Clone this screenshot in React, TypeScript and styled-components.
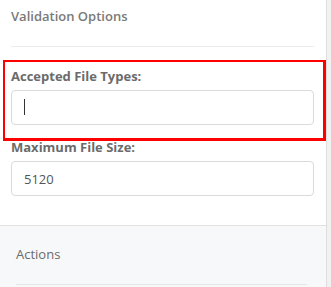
import React from 'react'
import styled, { createGlobalStyle } from 'styled-components'

const GlobalStyle = createGlobalStyle`
  body {
    margin: 0;
    background: #f1f1f1;
    font-family: "Open Sans", "Liberation Sans", sans-serif;
  }
`

const Panel = styled.div`
  width: 326px;
  height: 287px;
  background: #ffffff;
  border-right: 1px solid #dedede;
  display: flex;
  flex-direction: column;
  overflow: hidden;
`

const Section = styled.section`
  padding: 0 12px 29px 11px;
  border-bottom: 1px solid #e1e1e1;
`

const SectionTitle = styled.h3`
  margin: 0;
  padding: 7px 0 21px;
  font-size: 13px;
  line-height: 18px;
  font-weight: 600;
  color: #7a7a7a;
  border-bottom: 1px solid #ececec;
`

const Fields = styled.div`
  display: flex;
  flex-direction: column;
  gap: 13px;
  padding-top: 20px;
`

const Field = styled.div<{ $highlight?: boolean }>`
  position: relative;
  display: flex;
  flex-direction: column;
  gap: 5px;

  ${p => p.$highlight && `
    &::after {
      content: '';
      position: absolute;
      top: -7px;
      left: -8px;
      right: -12px;
      bottom: -16px;
      border: solid #ff0000;
      border-width: 2px 3px 3px 2px;
      pointer-events: none;
    }
  `}
`

const Label = styled.label`
  font-size: 13px;
  line-height: 18px;
  font-weight: 700;
  color: #6b6b6b;
`

const Input = styled.input`
  box-sizing: border-box;
  width: 100%;
  height: 35px;
  padding: 0 12px;
  border: 1px solid #dadada;
  border-radius: 4px;
  font-family: inherit;
  font-size: 13px;
  color: #555555;
  background: #ffffff;
  outline: none;
`

const Caret = styled.span`
  position: absolute;
  left: 13px;
  bottom: 10px;
  width: 1px;
  height: 16px;
  background: #333333;
`

const InputWrap = styled.div`
  position: relative;
`

const Actions = styled.section`
  flex: 1;
  background: #f7f8fa;
  padding: 19px 19px 0 16px;
`

const ActionsTitle = styled.h3`
  margin: 0;
  padding-bottom: 21px;
  font-size: 13px;
  line-height: 18px;
  font-weight: 400;
  color: #6b6b6b;
  border-bottom: 1px solid #e6e6e6;
`

export default function App() {
  return (
    <>
      <GlobalStyle />
      <Panel>
        <Section>
          <SectionTitle>Validation Options</SectionTitle>
          <Fields>
            <Field $highlight>
              <Label>Accepted File Types:</Label>
              <InputWrap>
                <Input defaultValue="" />
                <Caret />
              </InputWrap>
            </Field>
            <Field>
              <Label>Maximum File Size:</Label>
              <Input defaultValue="5120" />
            </Field>
          </Fields>
        </Section>
        <Actions>
          <ActionsTitle>Actions</ActionsTitle>
        </Actions>
      </Panel>
    </>
  )
}
